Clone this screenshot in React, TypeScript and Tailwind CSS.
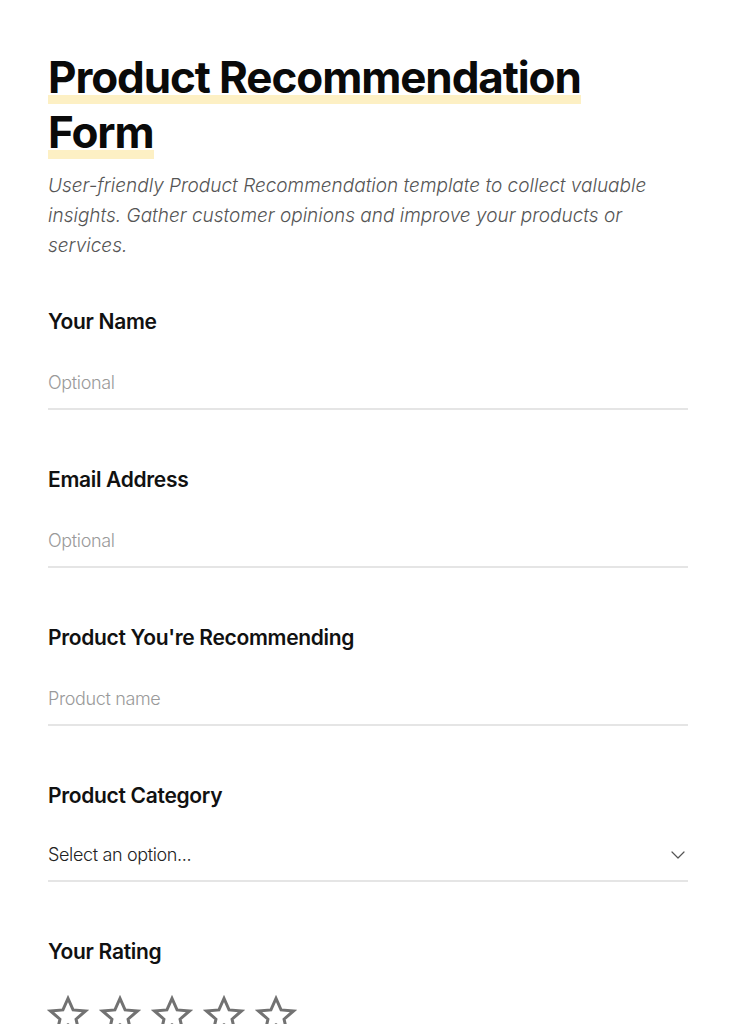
import { ChevronDown } from "lucide-react";

const font = { fontFamily: "Inter, 'Noto Sans', sans-serif" };

function Star() {
  return (
    <svg width="42" height="42" viewBox="0 0 24 24" fill="none" stroke="#727272" strokeWidth="1.7" strokeLinejoin="miter">
      <path d="M12 2.5l2.9 6.6 7.1.6-5.4 4.7 1.6 7-6.2-3.8-6.2 3.8 1.6-7L2 9.7l7.1-.6z" />
    </svg>
  );
}

function Label({ children }: { children: React.ReactNode }) {
  return (
    <label className="text-[21px] font-semibold text-[#111] tracking-[-0.015em] leading-[28px]">{children}</label>
  );
}

function Field({ label, placeholder }: { label: string; placeholder: string }) {
  return (
    <div className="flex flex-col">
      <Label>{label}</Label>
      <input
        placeholder={placeholder}
        className="mt-[35px] pb-[13px] border-b-2 border-[#e5e5e5] text-[18px] leading-[24px] outline-none placeholder:text-[#9a9a9a] placeholder:font-light tracking-[-0.02em]"
      />
    </div>
  );
}

export default function App() {
  return (
    <div className="min-h-screen bg-white px-12 pt-[50px]" style={font}>
      <h1 className="text-[44px] font-bold leading-[55px] tracking-[-0.025em] text-[#0a0a0a]">
        <span className="box-decoration-clone bg-[linear-gradient(transparent_83%,#fdf0c4_83%,#fdf0c4_100%)]">
          Product Recommendation Form
        </span>
      </h1>
      <p className="mt-[11px] text-[19px] italic font-light text-[#555] leading-[30px]">
        User-friendly Product Recommendation template to collect valuable insights. Gather customer opinions and improve your products or services.
      </p>

      <div className="mt-[47px] flex flex-col gap-[56px]">
        <Field label="Your Name" placeholder="Optional" />
        <Field label="Email Address" placeholder="Optional" />
        <Field label="Product You're Recommending" placeholder="Product name" />
        <div className="flex flex-col">
          <Label>Product Category</Label>
          <div className="mt-[33px] pb-[13px] border-b-2 border-[#e5e5e5] flex items-center justify-between">
            <span className="text-[18px] leading-[24px] text-[#222] font-light tracking-[-0.02em]">Select an option...</span>
            <ChevronDown size={24} strokeWidth={1.2} className="text-[#555] -mr-[2px]" />
          </div>
        </div>
        <div className="flex flex-col">
          <Label>Your Rating</Label>
          <div className="mt-[28px] flex gap-[10px] -ml-[1px]">
            <Star />
            <Star />
            <Star />
            <Star />
            <Star />
          </div>
        </div>
      </div>
    </div>
  );
}
